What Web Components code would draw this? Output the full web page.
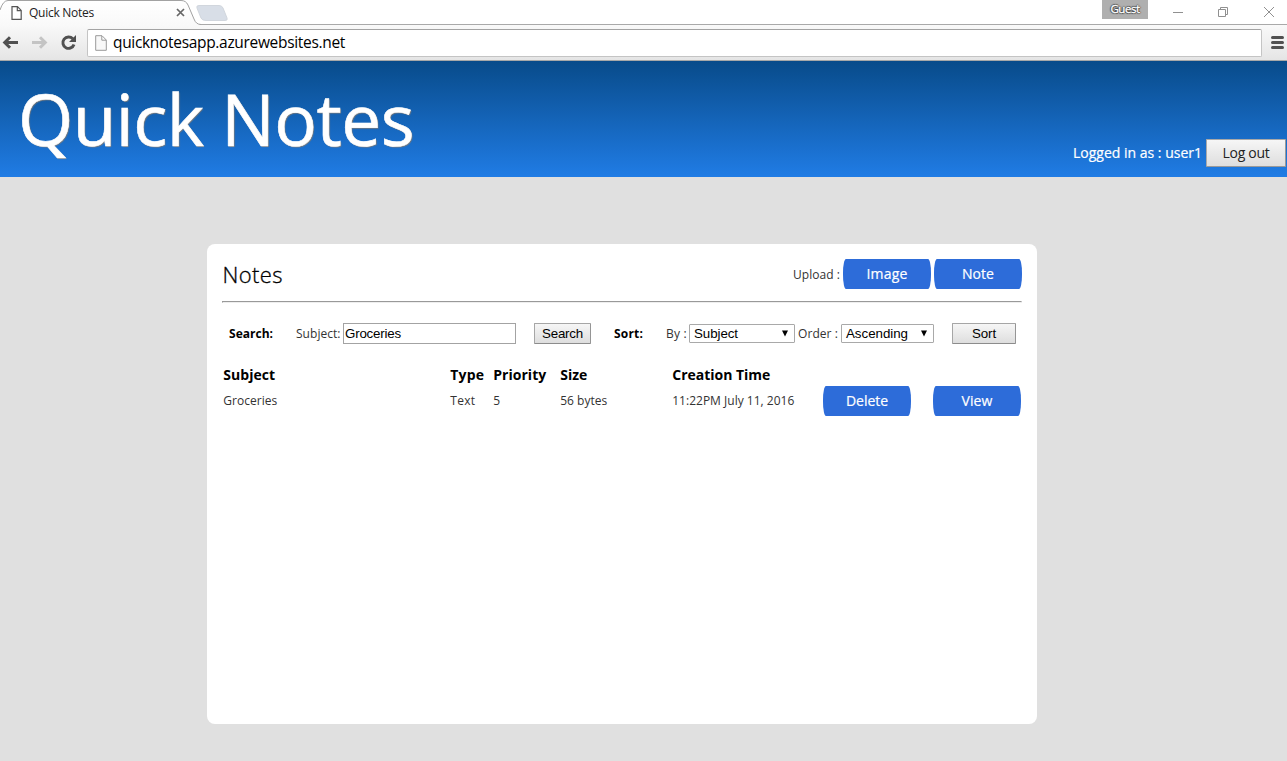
<!DOCTYPE html>
<html lang="en">
<head>
<meta charset="utf-8">
<title>Quick Notes</title>
<style>
html,body{margin:0;height:100%;overflow:hidden;background:#e0e0e0;font-family:"Open Sans","Noto Sans",sans-serif}
</style>
</head>
<body>
<quick-notes-window></quick-notes-window>
<script>
const define = (name, html, after) => customElements.define(name, class extends HTMLElement {
  connectedCallback() {
    if (!this.shadowRoot) {
      const t = document.createElement('template');
      t.innerHTML = html;
      this.attachShadow({mode: 'open'}).append(t.content.cloneNode(true));
    }
    if (after) after(this);
  }
});

/* A single line of text tracked so that it spans `w` pixels. */
define('fit-text', `<style>:host{display:inline-block;white-space:nowrap}span{display:inline-block}</style><span><slot></slot></span>`, el => {
  const w = parseFloat(el.getAttribute('w'));
  const span = el.shadowRoot.querySelector('span');
  const n = el.textContent.length;
  const now = span.getBoundingClientRect().width;
  if (w && now) { span.style.letterSpacing = ((w - now) / n).toFixed(3) + 'px'; el.style.width = w + 'px'; }
});

define('pill-button', `<style>
:host{display:flex;width:88px;height:30px;align-items:center;justify-content:center;background:#2d6cd9;color:#fff;border-radius:3px/14px;font-size:14px;line-height:30px;cursor:pointer;-webkit-text-stroke:.2px #fff}
</style><slot></slot>`);

define('push-button', `<style>
:host{display:flex;box-sizing:border-box;height:21px;align-items:center;justify-content:center;border:1px solid #a6a6a6;border-right-color:#959595;border-bottom-color:#8c8c8c;background:linear-gradient(#f6f6f6,#dedede);color:#000;font:13.33px/19px "Liberation Sans",Arial,sans-serif;border-radius:1px}
:host([large]){height:28px;width:80px;color:#222;-webkit-text-stroke:0;font:14px/26px "Open Sans",sans-serif;border-color:#a9a9a9 #999 #999 #a9a9a9}
</style><slot></slot>`);

define('text-field', `<style>
:host{display:block;box-sizing:border-box;width:173px;height:21px;border:1px solid #a3a3a3;background:#fff;padding-left:1px;font:13.33px/19px "Liberation Sans",Arial,sans-serif;color:#000}
</style><slot></slot>`);

define('select-box', `<style>
:host{display:flex;box-sizing:border-box;height:19px;border:1px solid #a9a9a9;border-radius:1px;background:#fff;justify-content:space-between;align-items:center;padding:0 5px 0 4px;font:13.33px/17px "Liberation Sans",Arial,sans-serif;color:#000}
svg{display:block;margin-top:-1px}
</style><slot></slot><svg width="8" height="7"><path d="M1 .5h6L4 6.500z" fill="#000"/></svg>`);

define('browser-chrome', `<style>
:host{display:block;height:61px;box-sizing:border-box;background:#fff;color:#222}
.strip{display:grid;grid-template-columns:230px 1fr 46px 139px;height:25px;background:linear-gradient(#a9a9a9,#a9a9a9) 0 24px/100% 1px no-repeat}
.tab{display:grid;grid-template:25px/230px}
.tab>*{grid-area:1/1}
.label{display:flex;align-items:center;padding-left:11px;font-size:12px;line-height:24px}
.label fit-text{margin-left:7px}
.label .x{margin-left:81.5px}
svg{display:block}
.guest{height:19px;background:#afafaf;color:#fff;display:flex;justify-content:center;font-size:11.5px;line-height:18px;text-shadow:1px 0 1px #444,-1px 0 1px #444,0 1px 1px #444,0 -1px 1px #444;-webkit-text-stroke:.3px #fff}
.bar{display:flex;box-sizing:border-box;height:36px;border-bottom:1px solid #a8a8a8;background:linear-gradient(#f9f9f9,#e5e5e5)}
.url{display:flex;align-items:center;box-sizing:border-box;width:1175px;height:28px;margin-top:4px;border:1px solid #c4c4c4;border-top-color:#a3a3a3;border-radius:2px;background:#fff;padding-left:7px;font-size:15.5px;line-height:26px;color:#000}
.url fit-text{margin-left:6px;margin-top:-2px}
</style>
<div class="strip">
 <div class="tab">
  <svg width="230" height="25"><defs><linearGradient id="g" x2="0" y2="1"><stop stop-color="#fff"/><stop offset="1" stop-color="#f9f9f9"/></linearGradient></defs>
   <path d="M0 25V11Q3 1.500 8 .5H182Q187 .5 189 5L195 20Q197 24.500 201 24.500V25Z" fill="url(#g)"/><path d="M0 10Q3 .5 8 .5H181Q186 .5 188 5L194 19Q196 24.500 201 24.500" fill="none" stroke="#a2a2a2"/>
   <path d="M199 5.500H219Q222 5.500 223 8L227 18Q228 20.500 225 20.500H206Q202 20.500 201 18L197 8Q196 5.500 199 5.500Z" fill="#d8dee7" stroke="#d1d6dd"/></svg>
  <div class="label"><svg width="11" height="14"><path d="M1 .7H6.500L10.200 4.400V13.300H1ZM6.300 1V4.700H10" fill="#fff" stroke="#555" stroke-width="1.2"/></svg><fit-text w="65">Quick Notes</fit-text>
  <svg class="x" width="9" height="9"><path d="M1 1L8 8M8 1L1 8" stroke="#666" stroke-width="1.7"/></svg></div>
 </div><span></span>
 <div class="guest"><fit-text w="29">Guest</fit-text></div>
 <svg width="139" height="24" fill="none" stroke="#909090"><path d="M25 12.500h10M70.500 9.500h7v7h-7zM72.500 9V7.500h7v7H78M116 7l10 10M126 7l-10 10"/></svg>
</div>
<div class="bar">
 <svg width="87" height="35"><path d="M4.500 17.500H18M10 12.200L4.700 17.500L10 22.800" fill="none" stroke="#505050" stroke-width="3"/><path d="M32 17.500H45M40 12.200L45.300 17.500L40 22.800" fill="none" stroke="#c4c4c4" stroke-width="3"/><path d="M72.800 13.800A5.700 5.700 0 1 0 74 19.500" fill="none" stroke="#505050" stroke-width="2.900"/><path d="M76 10V17H69Z" fill="#505050"/></svg>
 <div class="url"><svg width="12" height="16"><path d="M.7.700H7L11.300 5V15.300H.7ZM6.800 1V5.200H11" fill="#f8f8f8" stroke="#999"/></svg><fit-text w="232">quicknotesapp.azurewebsites.net</fit-text></div>
 <svg width="25" height="35"><path d="M10.500 12.500H20.500M10.500 17.500H20.500M10.500 22.500H20.500" stroke="#505050" stroke-width="3" stroke-linecap="round"/></svg>
</div>`);

define('site-header', `<style>
:host{display:flex;box-sizing:border-box;height:116px;background:linear-gradient(#084b8a,#207ce5);color:#fff;justify-content:space-between;padding:0 1px 0 18px}
h1{margin:0;font-size:71px;font-weight:400;line-height:116px;text-shadow:1px 1px 1px #7b7b7b;-webkit-text-stroke:.6px #fff}
.user{display:flex;align-self:flex-end;align-items:center;gap:4px;height:28px;margin-bottom:10px;font-size:14px;line-height:28px;-webkit-text-stroke:.2px #fff}
</style><h1><fit-text w="396">Quick Notes</fit-text></h1><div class="user"><fit-text w="129">Logged in as : user1</fit-text><push-button large><fit-text w="47">Log out</fit-text></push-button></div>`);

define('search-sort-bar', `<style>
:host{display:grid;grid-template-columns:67px 47px 191px 80px 52px 23px 109px 43px 111px 64px;padding-left:7px;height:21px;align-items:center;font-size:12px;line-height:21px;color:#333}
b{color:#000}
.by{width:106px}.order{width:93px}
.go{width:57px}
</style><b><fit-text w="44">Search:</fit-text></b><fit-text w="44.500">Subject:</fit-text><text-field><fit-text w="56">Groceries</fit-text></text-field><push-button class="go"><fit-text w="41">Search</fit-text></push-button><b><fit-text w="29">Sort:</fit-text></b><fit-text w="21">By :</fit-text><select-box class="by"><fit-text w="44">Subject</fit-text></select-box><fit-text w="40">Order :</fit-text><select-box class="order"><fit-text w="62">Ascending</fit-text></select-box><push-button><fit-text w="24">Sort</fit-text></push-button>`);

define('notes-table', `<style>
:host{display:block;margin-left:1px;color:#333}
.row{display:grid;grid-template-columns:227px 43px 67px 112px 151px 110px 88px;align-items:center;height:30px;font-size:12px}
.row>fit-text{padding:0 0 2px .25px}
.head{height:22px;font-size:14px;font-weight:700;color:#000}
</style>
<div class="row head"><fit-text w="52">Subject</fit-text><fit-text w="34">Type</fit-text><fit-text w="53">Priority</fit-text><fit-text w="27">Size</fit-text><fit-text w="98">Creation Time</fit-text></div>
<div class="row"><fit-text w="54">Groceries</fit-text><fit-text w="25">Text</fit-text><fit-text w="7">5</fit-text><fit-text w="47">56 bytes</fit-text><fit-text w="122">11:22PM July 11, 2016</fit-text><pill-button><fit-text w="42">Delete</fit-text></pill-button><pill-button><fit-text w="31">View</fit-text></pill-button></div>`);

define('notes-card', `<style>
:host{display:block;box-sizing:border-box;width:830px;height:480px;margin:67px 0 0 207px;background:#fff;border-radius:8px;padding:15px}
.top{display:flex;align-items:center;height:30px;color:#333}
h2{margin:0 auto 0 0;padding-left:.5px;font-size:22px;line-height:30px;font-weight:300;-webkit-text-stroke:.3px #000;color:#000}
.up{font-size:12px;margin-right:3px}
.top pill-button+pill-button{margin-left:3px}
hr{margin:12px 0 0;height:0;border:1px solid;border-color:#999 #eee #eee #999}
search-sort-bar{margin-top:20px}
notes-table{margin-top:20px}
</style>
<div class="top"><h2><fit-text w="60.5">Notes</fit-text></h2><fit-text class="up" w="47">Upload :</fit-text><pill-button><fit-text w="41">Image</fit-text></pill-button><pill-button><fit-text w="32">Note</fit-text></pill-button></div>
<hr><search-sort-bar></search-sort-bar><notes-table></notes-table>`);

define('quick-notes-window', `<style>:host{display:block;height:100vh;overflow:hidden}</style><browser-chrome></browser-chrome><site-header></site-header><notes-card></notes-card>`);
</script>
</body>
</html>
